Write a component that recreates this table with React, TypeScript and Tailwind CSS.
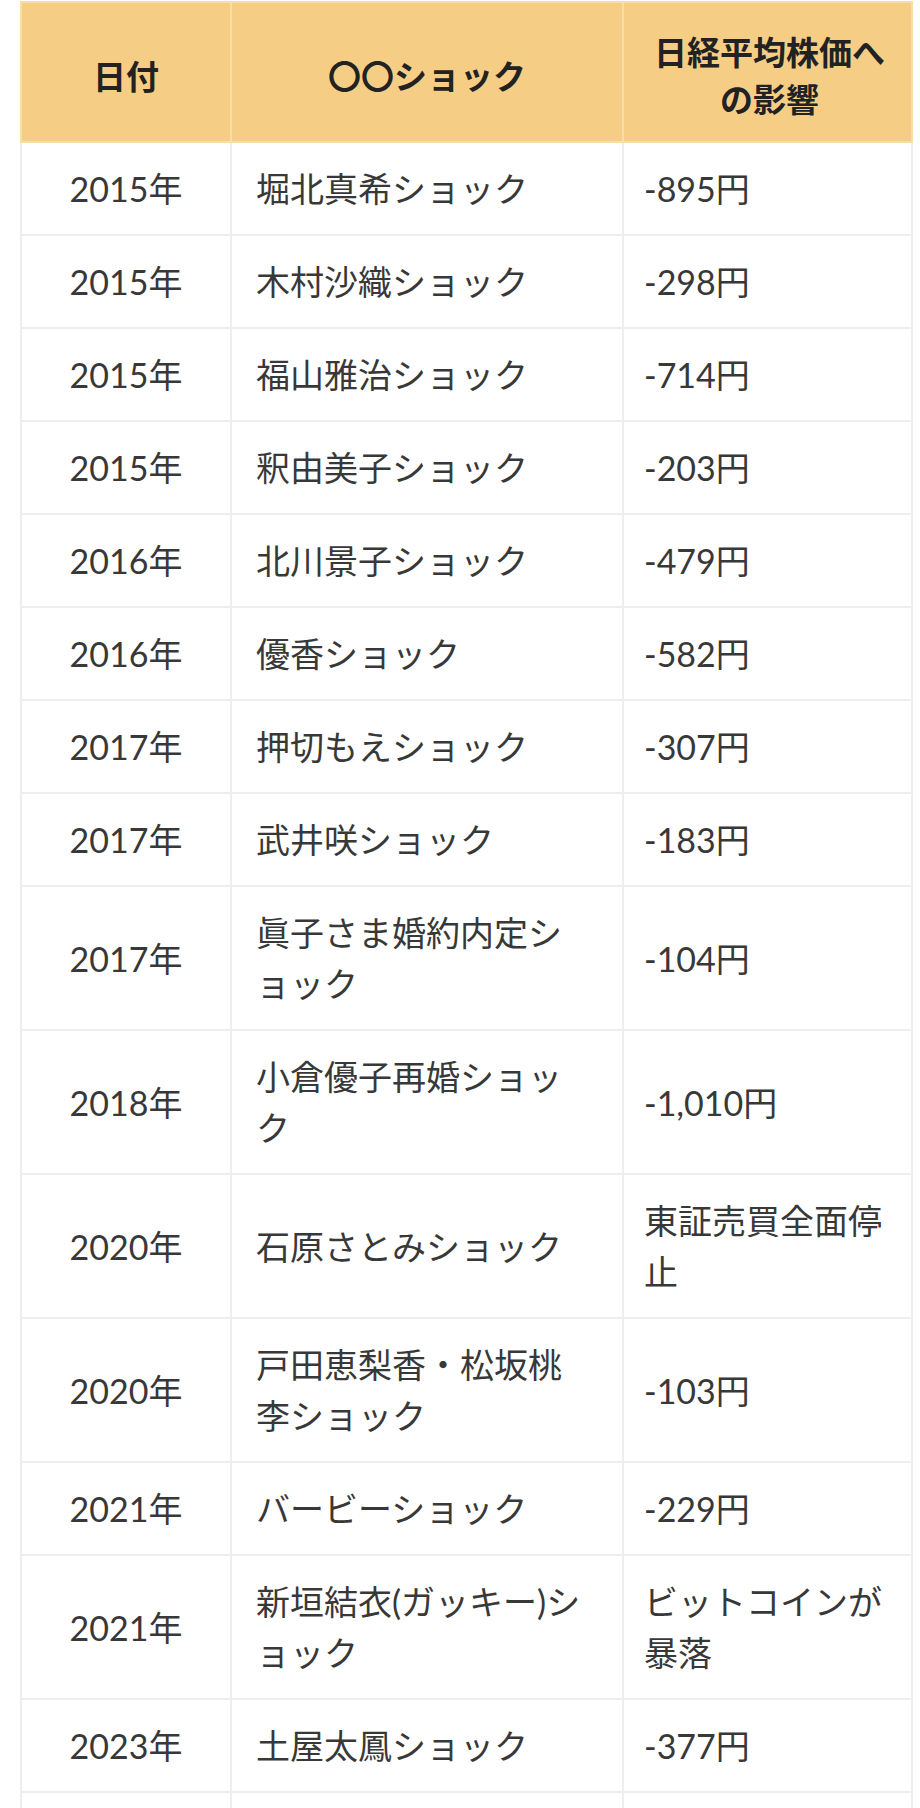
const rows: [string, string, string][] = [
  ["2015年", "堀北真希ショック", "-895円"],
  ["2015年", "木村沙織ショック", "-298円"],
  ["2015年", "福山雅治ショック", "-714円"],
  ["2015年", "釈由美子ショック", "-203円"],
  ["2016年", "北川景子ショック", "-479円"],
  ["2016年", "優香ショック", "-582円"],
  ["2017年", "押切もえショック", "-307円"],
  ["2017年", "武井咲ショック", "-183円"],
  ["2017年", "眞子さま婚約内定ショック", "-104円"],
  ["2018年", "小倉優子再婚ショック", "-1,010円"],
  ["2020年", "石原さとみショック", "東証売買全面停止"],
  ["2020年", "戸田恵梨香・松坂桃李ショック", "-103円"],
  ["2021年", "バービーショック", "-229円"],
  ["2021年", "新垣結衣(ガッキー)ショック", "ビットコインが暴落"],
  ["2023年", "土屋太鳳ショック", "-377円"],
];

const App = () => {
  return (
    <div
      className="w-[920px] h-[1808px] overflow-hidden bg-white pt-[1px]"
      style={{ fontFamily: "Lato, 'Noto Sans CJK JP', sans-serif" }}
    >
      <table className="ml-[20px] w-[891px] table-fixed border-collapse border-2 border-[#efefef]">
        <colgroup>
          <col className="w-[210px]" />
          <col className="w-[392px]" />
          <col className="w-[289px]" />
        </colgroup>
        <thead>
          <tr className="bg-[#f5cd85] text-[#222222] text-[33px] font-bold leading-[47px]">
            <th className="border-2 border-[#f9dcaa] pt-[26px] pb-[18px] px-4 text-center align-middle">
              日付
            </th>
            <th className="border-2 border-[#f9dcaa] pt-[26px] pb-[18px] px-4 text-center align-middle">
              〇〇ショック
            </th>
            <th className="border-2 border-[#f9dcaa] pt-[26px] pb-[18px] pl-[22px] pr-[18px] text-center align-middle">
              日経平均株価への影響
            </th>
          </tr>
        </thead>
        <tbody className="text-[#383838] text-[34px] leading-[51px]">
          {rows.map(([date, name, impact], i) => (
            <tr key={i} className="bg-white">
              <td className="border-2 border-[#eeeeee] py-[20px] px-4 text-center align-middle">
                {date}
              </td>
              <td className="border-2 border-[#eeeeee] py-[20px] pl-[24px] pr-[33px] text-left align-middle">
                {name}
              </td>
              <td className="border-2 border-[#eeeeee] py-[20px] pl-[20px] pr-[21px] text-left align-middle">
                {impact}
              </td>
            </tr>
          ))}
          <tr className="bg-white">
            <td className="border-2 border-[#eeeeee] h-[93px]"></td>
            <td className="border-2 border-[#eeeeee] h-[93px]"></td>
            <td className="border-2 border-[#eeeeee] h-[93px]"></td>
          </tr>
        </tbody>
      </table>
    </div>
  );
};

export default App;
